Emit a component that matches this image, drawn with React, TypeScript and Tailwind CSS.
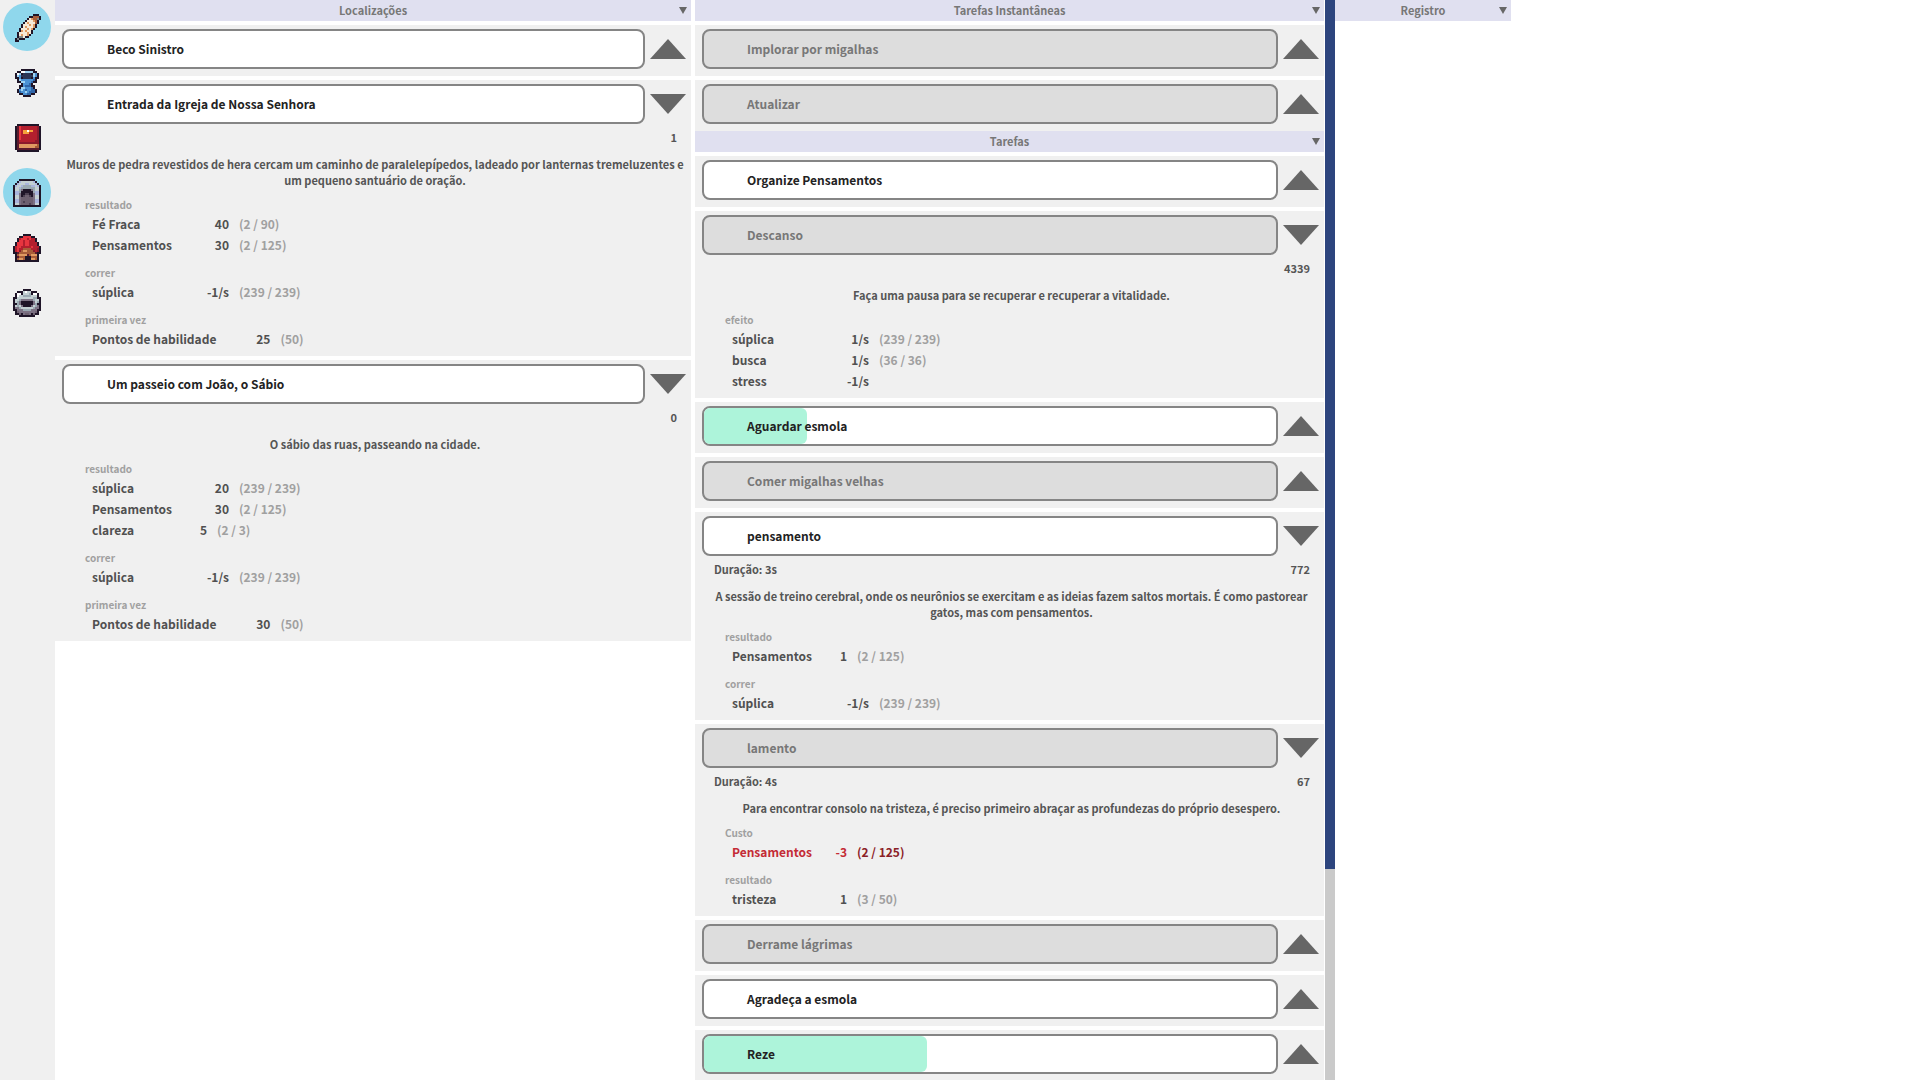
import React from "react";

type Effect = {
  name: string;
  value: string;
  cap?: string;
  narrow?: boolean;
  lacking?: boolean;
};
type Group = { title: string; effects: Effect[] };
type Item = {
  title: string;
  disabled?: boolean;
  progress?: number;
  details?: { duration?: string; count: string; text: string; groups: Group[] };
};

const palette: Record<string, string> = {
  K: "#1f1528",
  W: "#f6ead8",
  O: "#e09a62",
  N: "#a85c38",
  G: "#7d8787",
  L: "#9fd4f2",
  B: "#4b92d4",
  D: "#2b3655",
  V: "#2f66a8",
  R: "#b31f2e",
  r: "#8b1a2c",
  d: "#5c1a2c",
  E: "#e8353f",
  Y: "#f5a23a",
  w: "#ffffff",
  S: "#c3cfd2",
  s: "#9aa9b2",
  p: "#a9b4dc",
  P: "#6d6070",
  q: "#4c4052",
  M: "#7c7183",
};

const feather = [
  "..........KKK.",
  "........KKNNNK",
  ".......KWONNGK",
  "......KWWWONK.",
  ".....KWOWWWNK.",
  "....KWWWOWOK..",
  "....KWOWWWOK..",
  "...KWWWOWOK...",
  "...KOWOWWK....",
  "..KWWWWOWK....",
  "..KWOWWOK.....",
  "..KGGWKK......",
  ".KGKKK........",
  ".KK...........",
];
const goblet = [
  "....KKKKKKK...",
  "..KKwwLLLLKK..",
  ".KwLKDDDDKLBK.",
  ".KLBDDDDDDLBK.",
  ".KKBKDDDDKBKK.",
  "..KLBBBBBBVK..",
  "..KKLLBBBVKK..",
  "....KBBBVK....",
  "...KKBVVVKK...",
  "...KLLBBBVK...",
  "..KBLBVBBVVK..",
  "..KVBBLBVVVK..",
  "...KKBBVVKK...",
  ".....KKKK.....",
];
const book = [
  "..KKKKKKKKKKK.",
  ".KdERRRRRRRRrK",
  ".KdERRRRRRRRrK",
  ".KdERYYwYYRRrK",
  ".KdERYYYRRRRrK",
  ".KdERRRRRRRRrK",
  ".KdERRRRRRRRrK",
  ".KdERRRRRRRRrK",
  ".KdRRRRRRRRrrK",
  ".KdrrrrrrrrrrK",
  ".KdOOOOOOOOONK",
  ".KdOOOOOOOONNK",
  ".KdddddddddddK",
  "..KKKKKKKKKKK.",
];
const arch = [
  "...KKKKKKKK...",
  "..KpSSSSSSpK..",
  ".KpSSSppSSSpK.",
  "KpSSpssssppSpK",
  "KSSpsssssssSSK",
  "KSSsMKKKKMsSSK",
  "KppsKKKKKKsppK",
  "KppMKKqqKKMppK",
  "KSSMKqPPqKMSSK",
  "KSSMPPPPPPMSSK",
  "KppMPPPPPPMppK",
  "KppMPqPPPPMppK",
  "KSSMPPPPqPMSSK",
  "KKKKKKKKKKKKKK",
];
const robe = [
  ".....KKKK.....",
  "...KKEEEEKK...",
  "..KREEERERRK..",
  "..KEEREERRRK..",
  ".KEEEREERRRRK.",
  ".KEEEREERRRRK.",
  "KREERRRRRERRRK",
  "KRERRNNNNRRRrK",
  "KRErNOONNNrRrK",
  "KKdNNNNNNNNdKK",
  ".KNOOOOdNOOOK.",
  ".KdNNNKKKNNNK.",
  ".KNOONKKKOONK.",
  ".KKKKKKKKKKKK.",
];
const ring = [
  ".....KKKK.....",
  "..KKKSwSSKKK..",
  ".KwwKSSSsKwwK.",
  ".KwSSssssSSSK.",
  "KKSSSSSSSSssKK",
  "KSSsMMMMMMsSSK",
  "KSsMKKKKKKMSsK",
  "KKsMKKKKKKMsKK",
  "KSsSMKKKKMSsMK",
  "KMMsSSSSSSsMMK",
  "KKMMMssssMMMKK",
  ".KPMMMMMMMMPK.",
  ".KKPKMPPMKPKK.",
  "...KKKKKKKK...",
];

function PixelIcon({ rows }: { rows: string[] }) {
  return (
    <svg
      className="size-8"
      viewBox="-1 -1.5 16 16"
      shapeRendering="crispEdges"
      aria-hidden="true"
    >
      {rows.flatMap((row, y) =>
        [...row].map((c, x) =>
          c === "." ? null : (
            <rect key={`${x}-${y}`} x={x} y={y} width={1} height={1} fill={palette[c]} />
          ),
        ),
      )}
    </svg>
  );
}

const nav = [
  { label: "Tarefas", rows: feather, active: true },
  { label: "Itens", rows: goblet, active: false },
  { label: "Habilidades", rows: book, active: false },
  { label: "Locais", rows: arch, active: true },
  { label: "Equipamento", rows: robe, active: false },
  { label: "Encantamentos", rows: ring, active: false },
];

const locations: Item[] = [
  { title: "Beco Sinistro" },
  {
    title: "Entrada da Igreja de Nossa Senhora",
    details: {
      count: "1",
      text: "Muros de pedra revestidos de hera cercam um caminho de paralelepípedos, ladeado por lanternas tremeluzentes e um pequeno santuário de oração.",
      groups: [
        {
          title: "resultado",
          effects: [
            { name: "Fé Fraca", value: "40", cap: "(2 / 90)" },
            { name: "Pensamentos", value: "30", cap: "(2 / 125)" },
          ],
        },
        { title: "correr", effects: [{ name: "súplica", value: "-1/s", cap: "(239 / 239)" }] },
        {
          title: "primeira vez",
          effects: [{ name: "Pontos de habilidade", value: "25", cap: "(50)" }],
        },
      ],
    },
  },
  {
    title: "Um passeio com João, o Sábio",
    details: {
      count: "0",
      text: "O sábio das ruas, passeando na cidade.",
      groups: [
        {
          title: "resultado",
          effects: [
            { name: "súplica", value: "20", cap: "(239 / 239)" },
            { name: "Pensamentos", value: "30", cap: "(2 / 125)" },
            { name: "clareza", value: "5", cap: "(2 / 3)", narrow: true },
          ],
        },
        { title: "correr", effects: [{ name: "súplica", value: "-1/s", cap: "(239 / 239)" }] },
        {
          title: "primeira vez",
          effects: [{ name: "Pontos de habilidade", value: "30", cap: "(50)" }],
        },
      ],
    },
  },
];

const instantTasks: Item[] = [
  { title: "Implorar por migalhas", disabled: true },
  { title: "Atualizar", disabled: true },
];

const tasks: Item[] = [
  { title: "Organize Pensamentos" },
  {
    title: "Descanso",
    disabled: true,
    details: {
      count: "4339",
      text: "Faça uma pausa para se recuperar e recuperar a vitalidade.",
      groups: [
        {
          title: "efeito",
          effects: [
            { name: "súplica", value: "1/s", cap: "(239 / 239)" },
            { name: "busca", value: "1/s", cap: "(36 / 36)" },
            { name: "stress", value: "-1/s" },
          ],
        },
      ],
    },
  },
  { title: "Aguardar esmola", progress: 18 },
  { title: "Comer migalhas velhas", disabled: true },
  {
    title: "pensamento",
    details: {
      duration: "Duração: 3s",
      count: "772",
      text: "A sessão de treino cerebral, onde os neurônios se exercitam e as ideias fazem saltos mortais. É como pastorear gatos, mas com pensamentos.",
      groups: [
        {
          title: "resultado",
          effects: [{ name: "Pensamentos", value: "1", cap: "(2 / 125)", narrow: true }],
        },
        { title: "correr", effects: [{ name: "súplica", value: "-1/s", cap: "(239 / 239)" }] },
      ],
    },
  },
  {
    title: "lamento",
    disabled: true,
    details: {
      duration: "Duração: 4s",
      count: "67",
      text: "Para encontrar consolo na tristeza, é preciso primeiro abraçar as profundezas do próprio desespero.",
      groups: [
        {
          title: "Custo",
          effects: [
            { name: "Pensamentos", value: "-3", cap: "(2 / 125)", narrow: true, lacking: true },
          ],
        },
        {
          title: "resultado",
          effects: [{ name: "tristeza", value: "1", cap: "(3 / 50)", narrow: true }],
        },
      ],
    },
  },
  { title: "Derrame lágrimas", disabled: true },
  { title: "Agradeça a esmola" },
  { title: "Reze", progress: 39 },
];

function SectionHeader({ title }: { title: string }) {
  return (
    <header className="relative h-[21px] bg-[#e0e0f0] text-center text-[11px] leading-[21px] font-bold text-[#777]">
      <h2>{title}</h2>
      <button
        type="button"
        aria-label={`Recolher ${title}`}
        className="absolute top-[7px] right-1"
      >
        <svg className="h-[7px] w-2" viewBox="0 0 8 7" aria-hidden="true">
          <path d="M0 0h8L4 7z" fill="#666" />
        </svg>
      </button>
    </header>
  );
}

function EffectRow({ effect }: { effect: Effect }) {
  return (
    <li
      className={`flex h-[21px] items-center pl-[7px] text-[12px] leading-[21px] font-bold ${
        effect.lacking ? "text-[#c42b35]" : "text-[#505050]"
      }`}
    >
      <span className="min-w-[83px]">{effect.name}</span>
      <span className={`text-right ${effect.narrow ? "w-8" : "w-[54px]"}`}>{effect.value}</span>
      {effect.cap && (
        <span className={`pl-[10px] ${effect.lacking ? "text-[#8b2026]" : "text-[#a0a0a0]"}`}>
          {effect.cap}
        </span>
      )}
    </li>
  );
}

function Card({ item }: { item: Item }) {
  const { details } = item;
  return (
    <article className="bg-[#f0f0f0] pt-1">
      <div className="flex items-center gap-[5px] pr-[5px] pl-[7px]">
        <button
          type="button"
          disabled={item.disabled}
          className={`relative h-10 flex-1 overflow-hidden rounded-lg border-2 border-[#858585] pl-[43px] text-left text-[12px] font-bold ${
            item.disabled ? "bg-[#ddd] text-[#777]" : "bg-white text-[#222]"
          }`}
        >
          {item.progress !== undefined && (
            <span
              className="absolute inset-y-0 left-0 rounded-r-md bg-[#adf4da]"
              style={{ width: `${item.progress}%` }}
            />
          )}
          <span className="relative">{item.title}</span>
        </button>
        <button type="button" aria-label={`${details ? "Recolher" : "Expandir"} ${item.title}`}>
          <svg className="h-5 w-9" viewBox="0 0 36 20" aria-hidden="true">
            <path d={details ? "M0 0h36L18 20z" : "M0 20h36L18 0z"} fill="#666" />
          </svg>
        </button>
      </div>
      {details ? (
        <div className="pt-[2px] pb-[7px]">
          <p className="flex h-[22px] items-center justify-between pr-[14px] pl-[19px] text-[11px] font-bold text-[#555]">
            <span>{details.duration}</span>
            <span>{details.count}</span>
          </p>
          <p className="mt-[8px] mb-[9px] pr-1 pl-2 text-center text-[11px] leading-4 font-bold text-[#555]">
            {details.text}
          </p>
          <div className="flex flex-col gap-[10px] pl-[30px]">
            {details.groups.map((g) => (
              <section key={g.title}>
                <h3 className="text-[10px] leading-4 font-bold text-[#a0a0a0]">{g.title}</h3>
                <ul>
                  {g.effects.map((e) => (
                    <EffectRow key={e.name} effect={e} />
                  ))}
                </ul>
              </section>
            ))}
          </div>
        </div>
      ) : (
        <div className="h-[7px]" />
      )}
    </article>
  );
}

function Section({ title, items }: { title: string; items: Item[] }) {
  return (
    <section>
      <SectionHeader title={title} />
      <div className="flex flex-col gap-1 pt-1">
        {items.map((item) => (
          <Card key={item.title} item={item} />
        ))}
      </div>
    </section>
  );
}

export default function App() {
  return (
    <div className="flex h-screen overflow-hidden bg-white font-['Noto_Sans_CJK_SC',sans-serif]">
      <nav className="flex w-[55px] shrink-0 flex-col items-center gap-[7px] bg-[#f0f0f0] pt-[3px] pr-px">
        {nav.map((n) => (
          <button
            key={n.label}
            type="button"
            aria-label={n.label}
            aria-pressed={n.active}
            className={`flex size-12 shrink-0 items-center justify-center rounded-full ${n.active ? "bg-[#8fd7ec]" : ""}`}
          >
            <PixelIcon rows={n.rows} />
          </button>
        ))}
      </nav>
      <main className="flex min-w-0 flex-1">
        <div className="w-[calc(100vw/3)] shrink-0 pr-1">
          <Section title="Localizações" items={locations} />
        </div>
        <div className="flex w-[calc(100vw/3)] shrink-0 gap-px">
          <div className="min-w-0 flex-1">
            <Section title="Tarefas Instantâneas" items={instantTasks} />
            <Section title="Tarefas" items={tasks} />
          </div>
          <div className="h-screen w-[10px] bg-[#cacaca]">
            <div className="h-[80.5%] bg-[#2d457e]" />
          </div>
        </div>
        <div className="w-44 shrink-0">
          <SectionHeader title="Registro" />
        </div>
      </main>
    </div>
  );
}
